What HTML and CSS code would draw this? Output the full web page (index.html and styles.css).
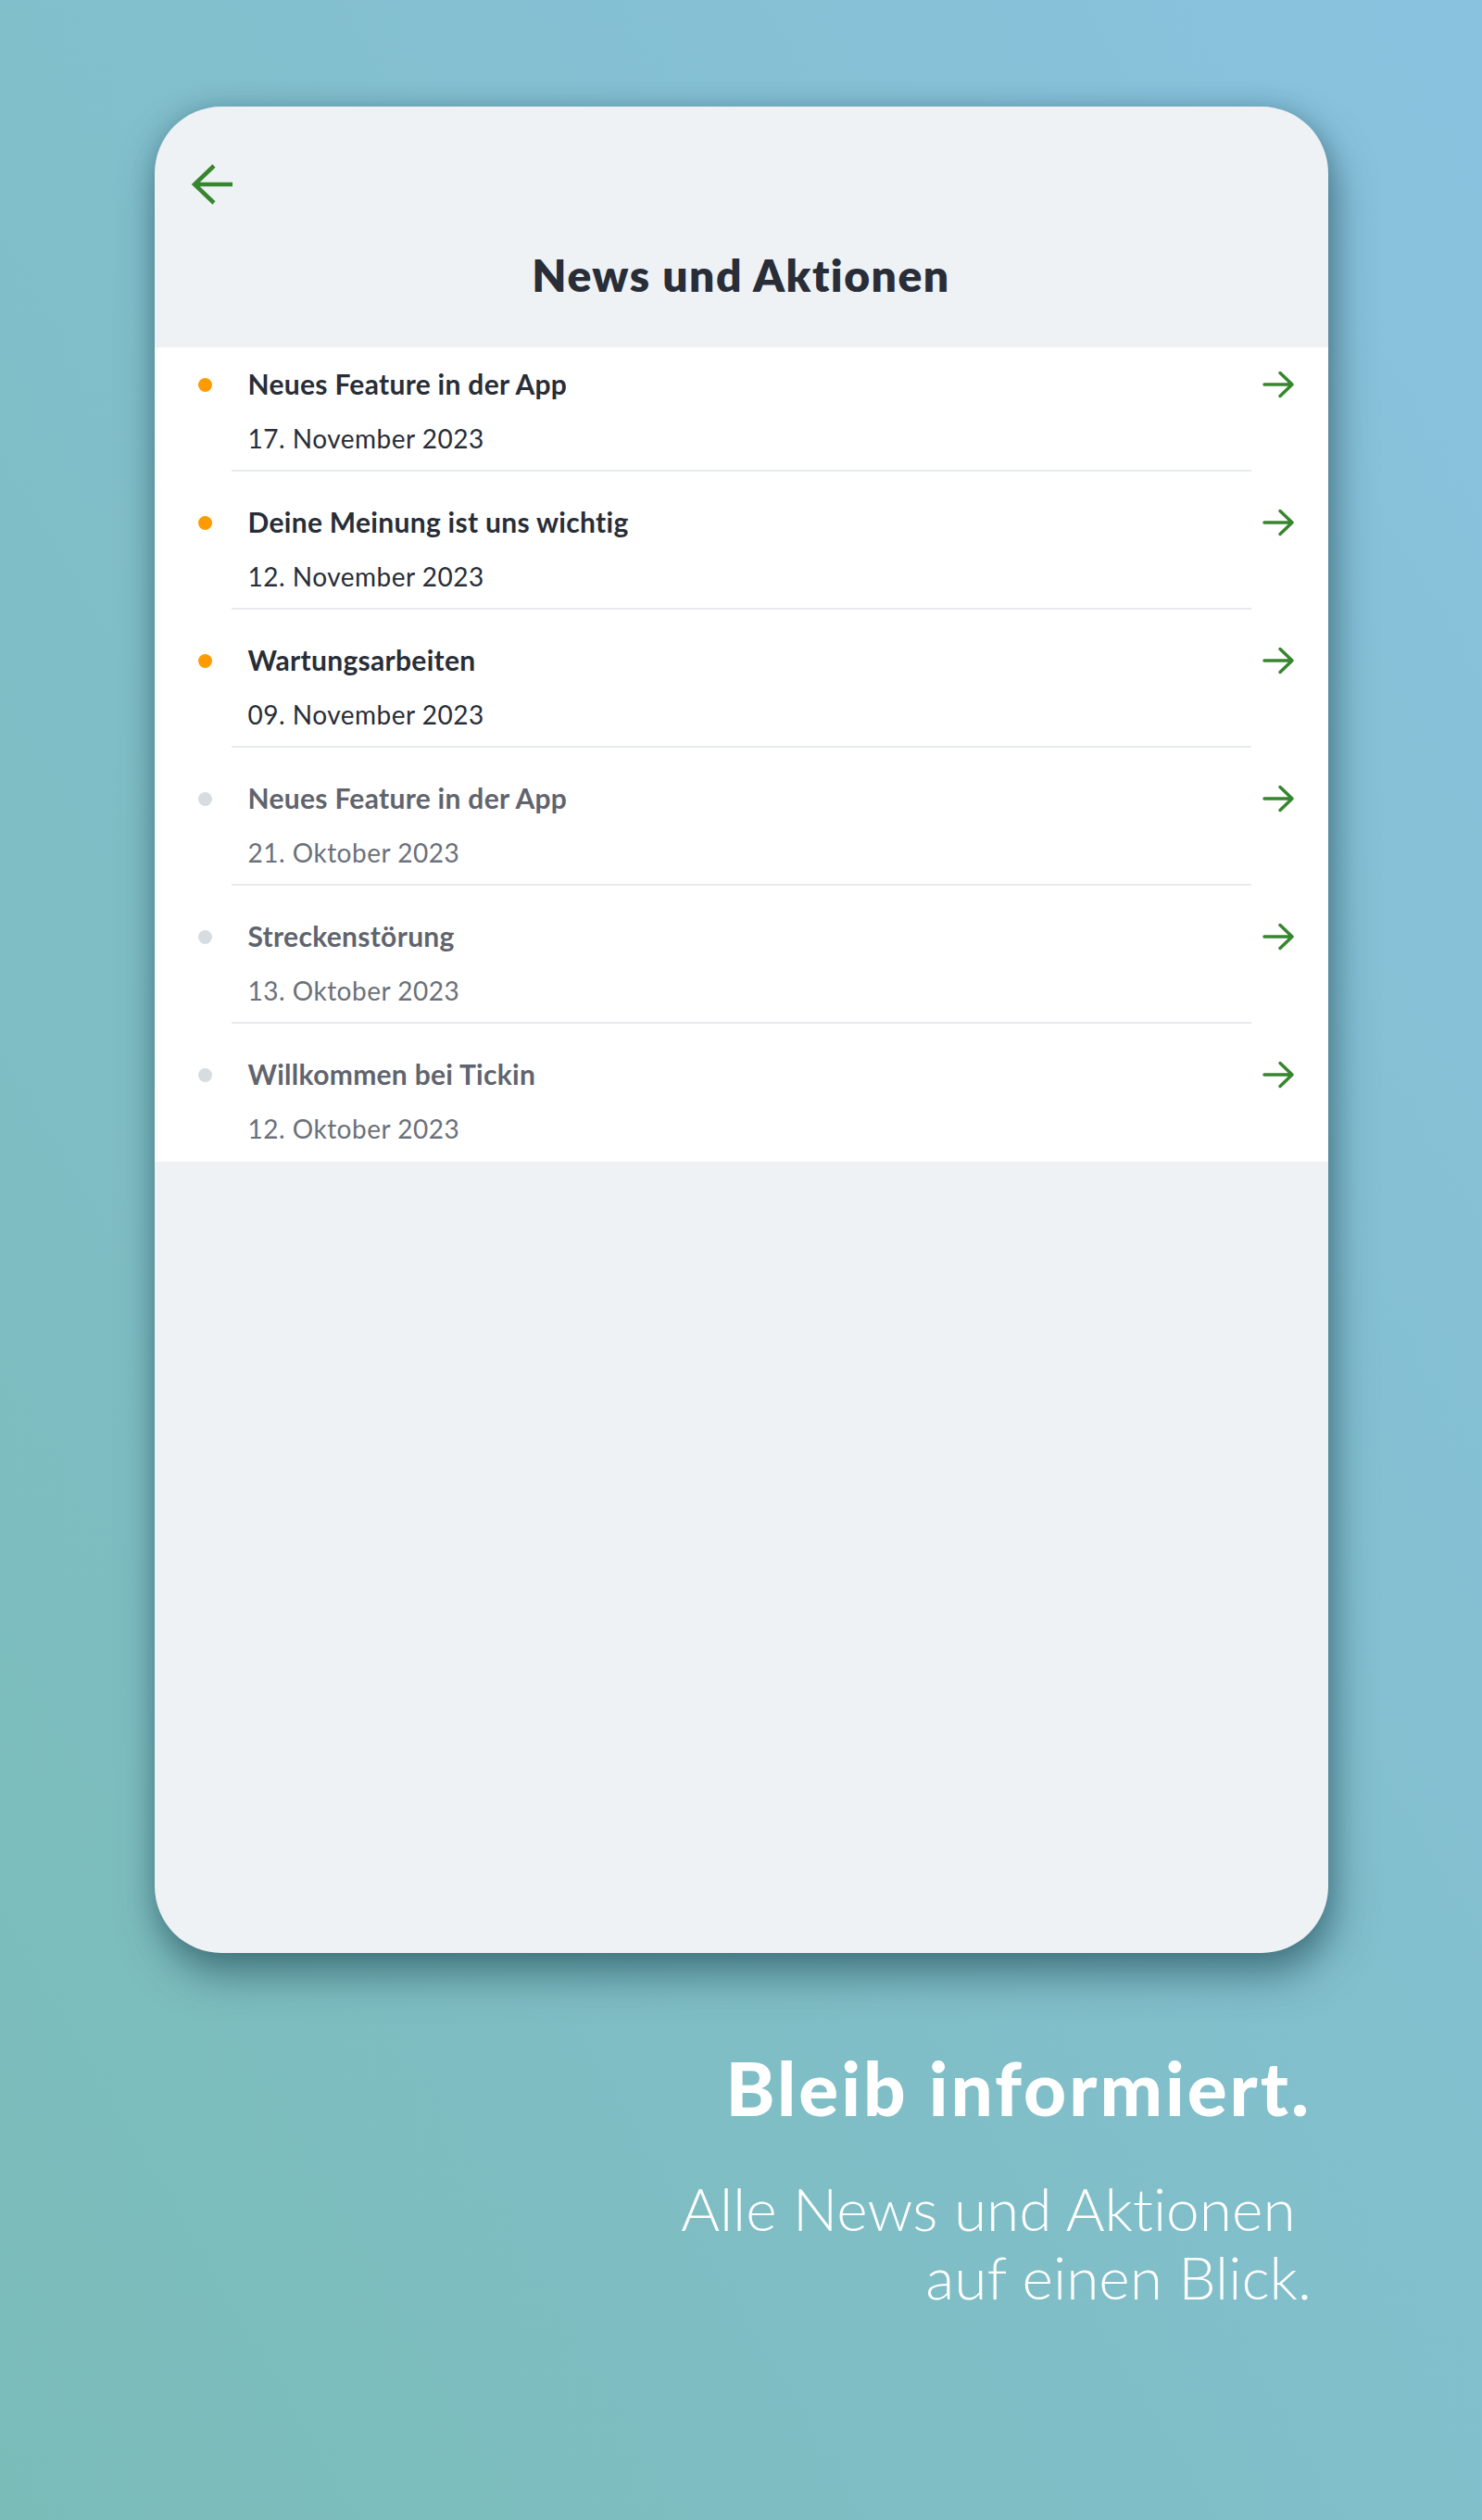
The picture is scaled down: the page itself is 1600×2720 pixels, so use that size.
FILE: index.html
```html
<!DOCTYPE html>
<html lang="de">
  <head>
    <meta charset="UTF-8" />
    <meta name="viewport" content="width=device-width, initial-scale=1.0" />
    <title>News und Aktionen</title>
    <link rel="stylesheet" href="styles.css">
  </head>
  <body>
    <div class="page">
      <div class="card">
        <div class="card-header">
          <svg class="back" width="48" height="48" viewBox="0 0 48 48" aria-label="Zurück">
            <path d="M26 4 L5 24 L26 44 M5 24 H46" />
          </svg>
          <h1 class="title">News und Aktionen</h1>
        </div>

        <ul class="news-list">
          <li class="news-item">
            <span class="dot"></span>
            <div class="news-body">
              <div class="news-title">Neues Feature in der App</div>
              <div class="news-date">17. November 2023</div>
            </div>
            <svg class="go" width="36" height="32" viewBox="0 0 36 32"><path d="M3 16 H33 M20 3.5 L33 16 L20 28.5" /></svg>
          </li>
          <li class="news-item">
            <span class="dot"></span>
            <div class="news-body">
              <div class="news-title">Deine Meinung ist uns wichtig</div>
              <div class="news-date">12. November 2023</div>
            </div>
            <svg class="go" width="36" height="32" viewBox="0 0 36 32"><path d="M3 16 H33 M20 3.5 L33 16 L20 28.5" /></svg>
          </li>
          <li class="news-item">
            <span class="dot"></span>
            <div class="news-body">
              <div class="news-title">Wartungsarbeiten</div>
              <div class="news-date">09. November 2023</div>
            </div>
            <svg class="go" width="36" height="32" viewBox="0 0 36 32"><path d="M3 16 H33 M20 3.5 L33 16 L20 28.5" /></svg>
          </li>
          <li class="news-item is-read">
            <span class="dot"></span>
            <div class="news-body">
              <div class="news-title">Neues Feature in der App</div>
              <div class="news-date">21. Oktober 2023</div>
            </div>
            <svg class="go" width="36" height="32" viewBox="0 0 36 32"><path d="M3 16 H33 M20 3.5 L33 16 L20 28.5" /></svg>
          </li>
          <li class="news-item is-read">
            <span class="dot"></span>
            <div class="news-body">
              <div class="news-title">Streckenstörung</div>
              <div class="news-date">13. Oktober 2023</div>
            </div>
            <svg class="go" width="36" height="32" viewBox="0 0 36 32"><path d="M3 16 H33 M20 3.5 L33 16 L20 28.5" /></svg>
          </li>
          <li class="news-item is-read">
            <span class="dot"></span>
            <div class="news-body">
              <div class="news-title">Willkommen bei Tickin</div>
              <div class="news-date">12. Oktober 2023</div>
            </div>
            <svg class="go" width="36" height="32" viewBox="0 0 36 32"><path d="M3 16 H33 M20 3.5 L33 16 L20 28.5" /></svg>
          </li>
        </ul>
      </div>

      <div class="tagline">
        <div class="tagline-head">Bleib informiert.</div>
        <div class="tagline-text">Alle News und Aktionen&nbsp;<br />auf einen Blick.</div>
      </div>
    </div>
  </body>
</html>
```

FILE: styles.css
```css
body {
  margin: 0;
  width: 1600px;
  height: 2720px;
  overflow: hidden;
  font-family: Lato, "Open Sans", sans-serif;
  font-variant-ligatures: none;
  background: linear-gradient(to top right, #7abcb8 0%, #81bfcb 50%, #89c2df 100%);
}
.page {
  padding-top: 115px;
}
.card {
  width: 1267px;
  height: 1993px;
  margin: 0 auto;
  border-radius: 72px;
  background: #eef2f5;
  overflow: hidden;
  box-shadow: 6px 24px 44px rgba(30, 70, 80, 0.55), 0 0 24px rgba(30, 70, 90, 0.25);
}
.card-header {
  padding: 60px 0 49px;
}
.back {
  display: block;
  margin-left: 38px;
  fill: none;
  stroke: #37862f;
  stroke-width: 4.5;
}
.title {
  margin: 45px 0 0;
  font-size: 48px;
  line-height: 58px;
  font-weight: 800;
  letter-spacing: 1.5px;
  text-align: center;
  color: #282d37;
}
.news-list {
  list-style: none;
  margin: 0;
  padding: 0;
  background: #fff;
}
.news-item {
  --pad: 36px;
  display: grid;
  grid-template-columns: 83px 1fr 83px;
  align-items: start;
}
.news-item:first-child {
  --pad: 21px;
}
.dot {
  width: 15px;
  height: 15px;
  margin: calc(var(--pad) + 12px) 0 0 47px;
  border-radius: 50%;
  background: #ff9b00;
}
.news-body {
  padding: var(--pad) 0 16px 18px;
  border-bottom: 2px solid #e8eaed;
}
.news-item:last-child .news-body {
  padding-bottom: 18px;
  border-bottom: none;
}
.news-title {
  font-size: 30px;
  line-height: 36px;
  font-weight: 700;
  letter-spacing: 0.3px;
  color: #282d37;
}
.news-date {
  margin-top: 23px;
  font-size: 28px;
  line-height: 36px;
  letter-spacing: 0.5px;
  color: #282d37;
}
.go {
  display: block;
  margin: calc(var(--pad) + 3px) 0 0 11px;
  fill: none;
  stroke: #37862f;
  stroke-width: 3.5;
  stroke-linecap: round;
  stroke-linejoin: round;
}
.is-read .dot {
  background: #d7dce1;
}
.is-read .news-title {
  color: #5f646e;
}
.is-read .news-date {
  color: #6b7079;
}
.tagline {
  margin-top: 98px;
  padding-right: 184px;
  text-align: right;
  color: #fff;
}
.tagline-head {
  font-size: 80px;
  line-height: 94px;
  font-weight: 900;
  letter-spacing: 3px;
}
.tagline-text {
  margin-top: 47px;
  font-size: 64px;
  line-height: 74px;
  font-weight: 300;
}
```
